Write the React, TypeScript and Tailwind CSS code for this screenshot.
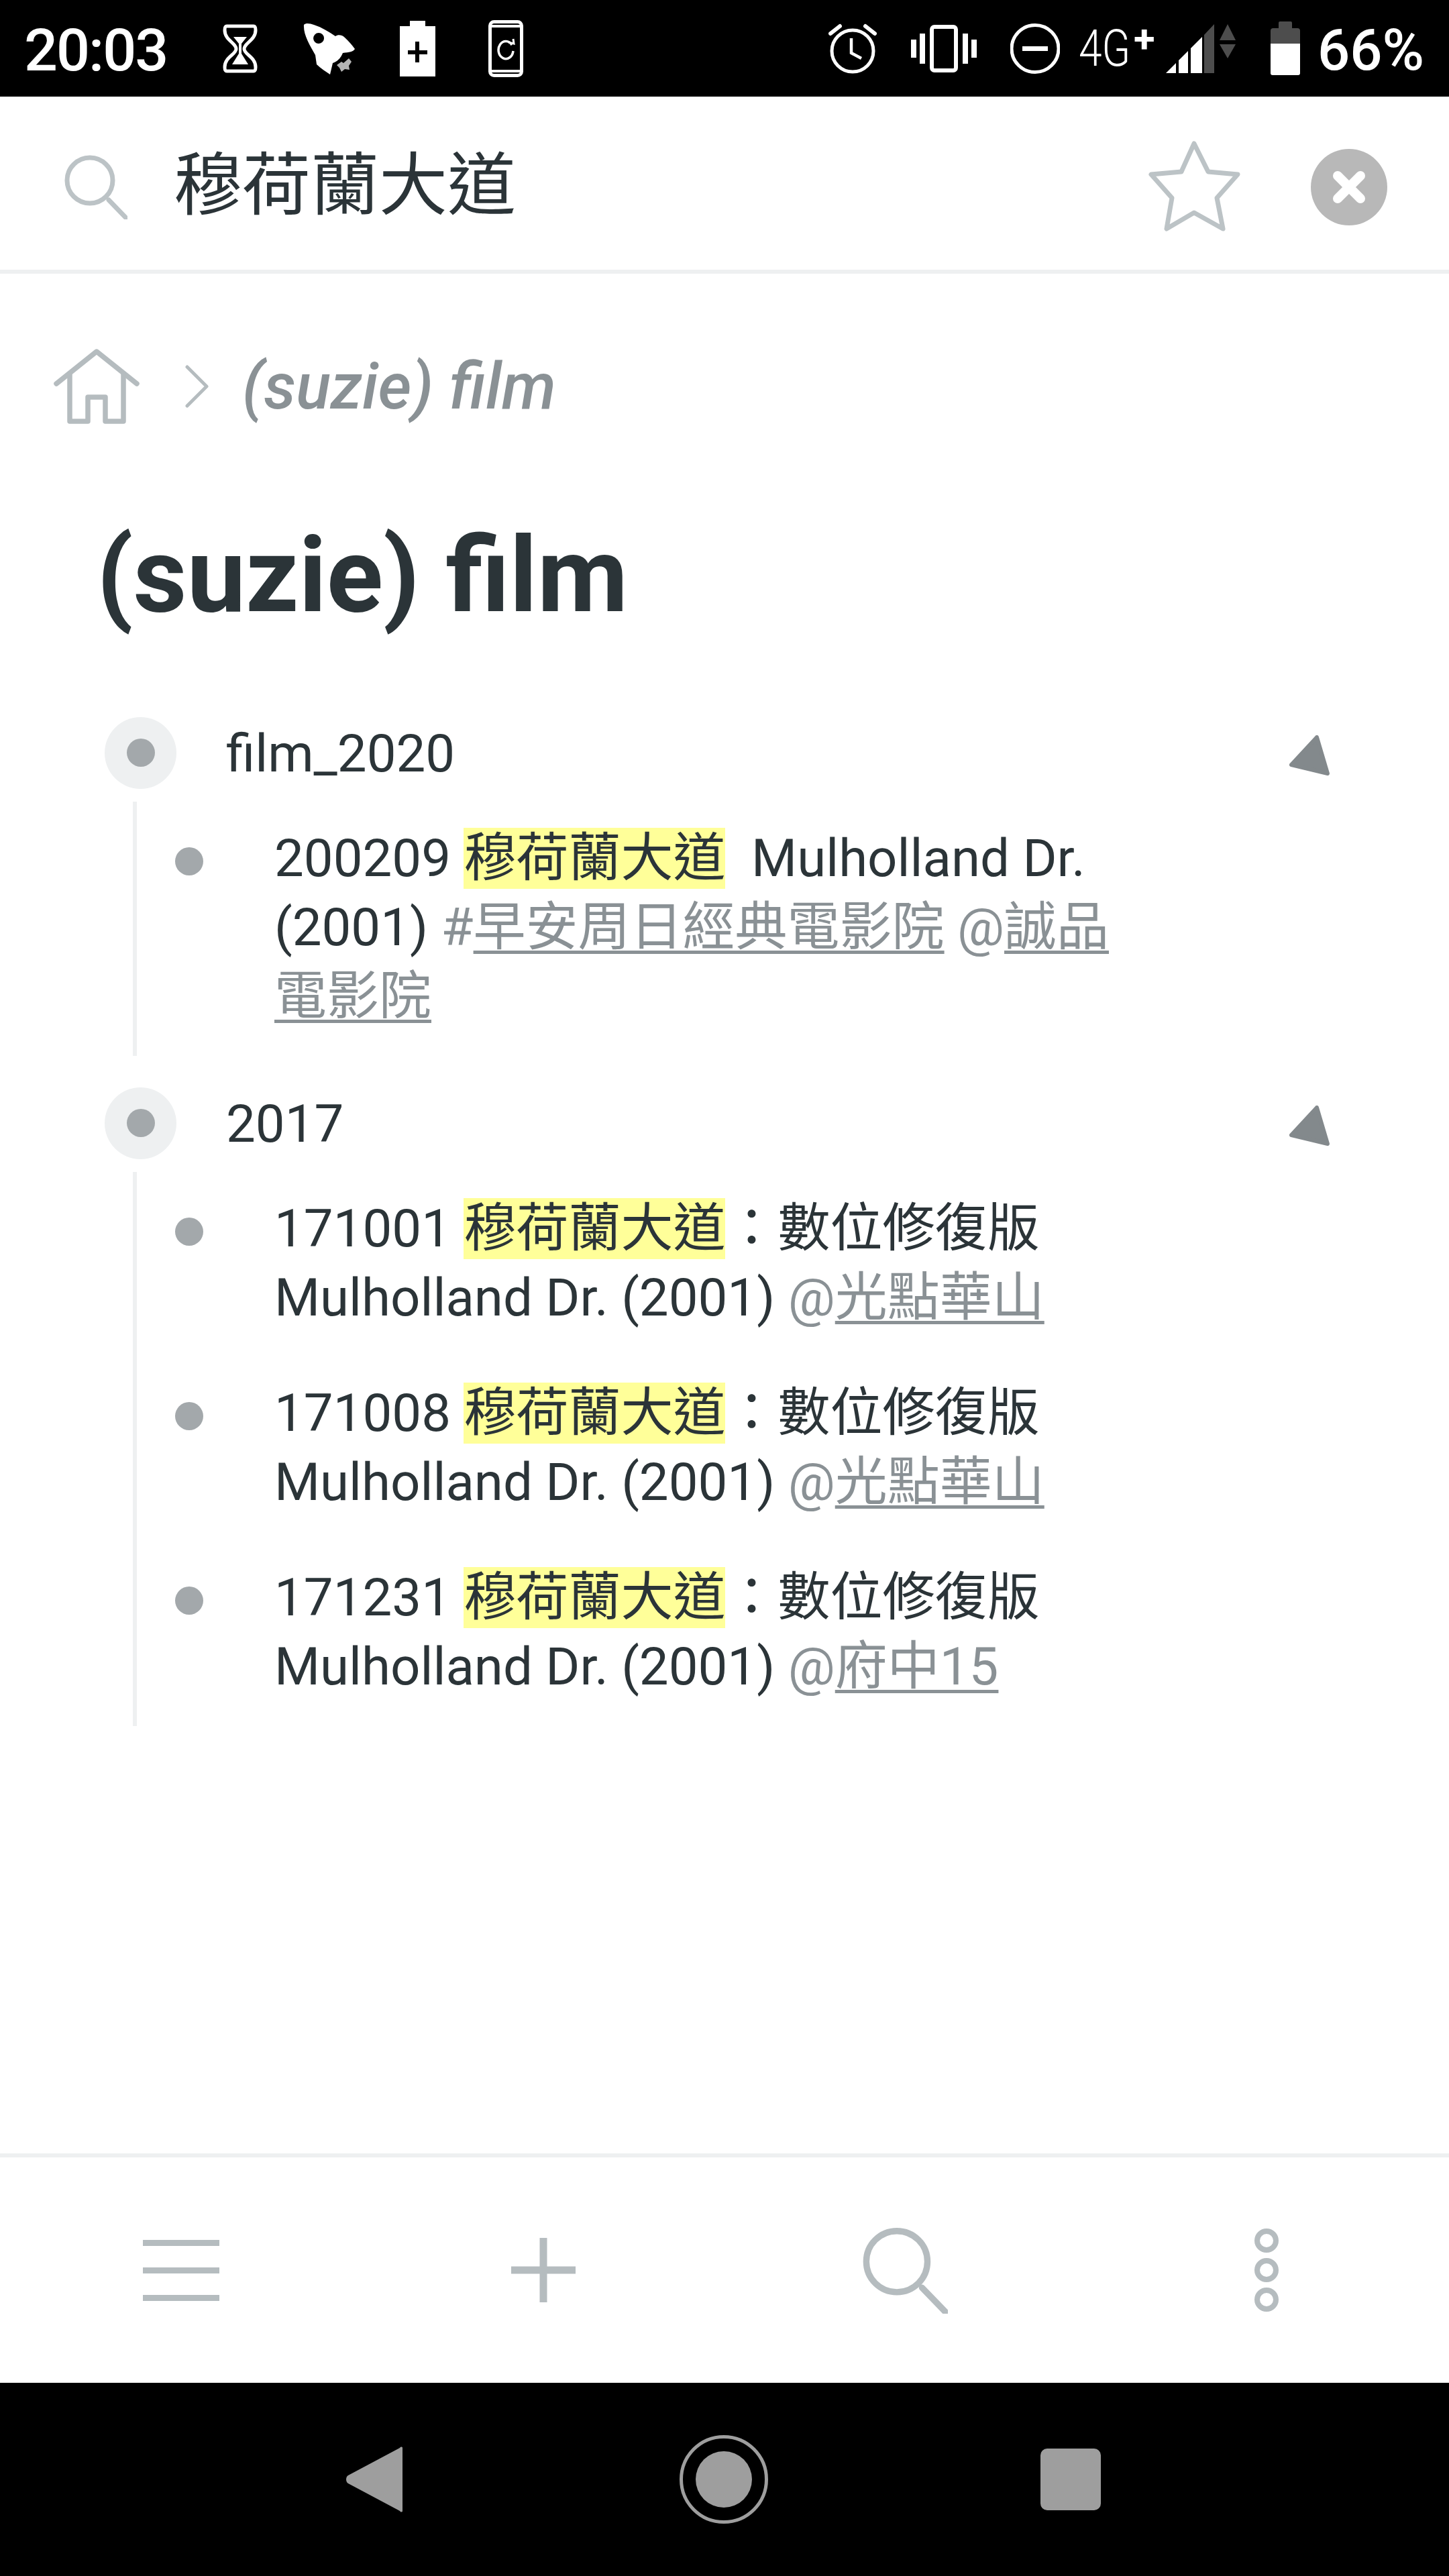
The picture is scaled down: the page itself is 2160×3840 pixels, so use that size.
import React from 'react';

const Search = ({ className }: { className: string }) => (
  <svg viewBox="0 0 94 97" className={className} fill="none" stroke="currentColor" strokeWidth="7">
    <circle cx="38" cy="39" r="34" />
    <path d="M66 68 L92 95" strokeLinecap="round" />
  </svg>
);

const Triangle = () => (
  <svg viewBox="0 0 60 60" className="w-[60px] h-[60px] ml-auto mr-[178px] mt-[5px] text-[#83898c]" fill="currentColor" stroke="currentColor" strokeWidth="6" strokeLinejoin="round">
    <path d="M41 3 L3 44 L57 57 Z" />
  </svg>
);

const Hit = () => <span className="bg-[#ffff99]">穆荷蘭大道</span>;

const Ref = ({ mark, children }: { mark: string; children: React.ReactNode }) => (
  <span className="text-[#8a9195]">
    {mark}
    <span className="underline decoration-[5px] underline-offset-[8px]">{children}</span>
  </span>
);

const Group = ({ title, children }: { title: string; children: React.ReactNode }) => (
  <section className="mb-[48px]">
    <div className="flex items-center h-[107px] ml-[156px]">
      <div className="w-[107px] h-[107px] -mt-[3px] rounded-full bg-[#eef0f1] flex items-center justify-center">
        <div className="w-[42px] h-[42px] rounded-full bg-[#a3a8ab]" />
      </div>
      <div className="ml-[74px] text-[78px] leading-[107px]">{title}</div>
      <Triangle />
    </div>
    <div className="ml-[198px] mt-[18px] border-l-[6px] border-[#eef0f1] pt-[33px] pb-[37px] flex flex-col gap-[69px]">
      {children}
    </div>
  </section>
);

const Row = ({ children }: { children: React.ReactNode }) => (
  <div className="flex items-start">
    <div className="w-[42px] h-[42px] mt-[35px] ml-[57px] rounded-full bg-[#a3a8ab] shrink-0" />
    <div className="ml-[106px] w-[1280px] text-[78px] leading-[103px]">{children}</div>
  </div>
);

export default function App() {
  return (
    <div className="w-[2160px] h-[3840px] flex flex-col bg-white text-[#2b3438] font-[family-name:Roboto,'Noto_Sans_CJK_TC',sans-serif]">
      {/* status bar */}
      <div className="h-[144px] shrink-0 bg-black text-white flex items-center">
        <span className="ml-[36px] w-[210px] text-[88px] font-medium tracking-[-2px] leading-none mt-[6px] whitespace-nowrap">20:03</span>
        <svg viewBox="0 0 52 73" className="ml-[86px] w-[52px] h-[73px]" fill="none" stroke="currentColor" strokeWidth="5">
          <path d="M6 3 H46 C49 3 49 6 49 9 C49 24 32 28 32 37 C32 45 49 49 49 64 C49 67 49 70 46 70 H6 C3 70 3 67 3 64 C3 49 20 45 20 37 C20 28 3 24 3 9 C3 6 3 3 6 3 Z" />
          <path d="M16 19 H36 L28 29 V44 L38 60 H14 L24 44 V29 Z" fill="currentColor" stroke="none" />
        </svg>
        <svg viewBox="0 0 77 77" className="ml-[68px] w-[77px] h-[77px]" fill="currentColor">
          <path fillRule="evenodd" d="M1 3 C4 0 10 1 16 3 C28 7 38 13 48 20 C52 17 58 18 62 22 C68 28 73 33 77 39 C75 43 68 44 59 45 C56 52 52 57 44 60 L40 77 C34 73 26 68 20 62 L18 48 C10 34 0 18 1 3 Z M23 15 A8 8 0 1 0 23.1 31 A8 8 0 1 0 23 15 Z" />
          <path d="M50 63 L57 58 L60 60 L68 53 L72 58 L68 64 L69 70 L62 69 L57 73 L54 67 Z" fill="#b5b5b5" />
        </svg>
        <svg viewBox="0 0 53 83" className="ml-[67px] w-[53px] h-[83px]" fill="currentColor">
          <path fillRule="evenodd" d="M15 0 H38 V8 H53 V83 H0 V8 H15 Z M23 31 V44 H12 V50 H23 V62 H29 V50 H41 V44 H29 V31 Z" />
        </svg>
        <svg viewBox="0 0 52 85" className="ml-[79px] w-[52px] h-[85px]" fill="none" stroke="currentColor">
          <rect x="2.5" y="2.5" width="47" height="80" rx="6" strokeWidth="5" />
          <path d="M2 9 H50 M2 76 H50" strokeWidth="4" />
          <path d="M35 37 A11 13 0 1 0 37 46" strokeWidth="3.5" />
          <path d="M30 33 L38 35 L37 28" strokeWidth="3" />
        </svg>
        <svg viewBox="0 0 72 75" className="ml-[455px] w-[72px] h-[75px]" fill="none" stroke="currentColor" strokeWidth="5">
          <circle cx="36" cy="41" r="31" />
          <path d="M3 15 L17 4 M55 4 L69 15" strokeLinecap="round" strokeWidth="6" />
          <path d="M34 22 V44 L49 52" strokeWidth="4.5" />
        </svg>
        <svg viewBox="0 0 98 71" className="ml-[51px] w-[98px] h-[71px]" fill="none" stroke="currentColor">
          <rect x="31" y="3" width="36" height="65" rx="4" strokeWidth="6" />
          <path d="M4 22 V49 M17 13 V58 M81 13 V58 M94 22 V49" strokeWidth="8" />
        </svg>
        <svg viewBox="0 0 74 75" className="ml-[50px] w-[74px] h-[75px]" fill="none" stroke="currentColor">
          <circle cx="37" cy="37.5" r="35" strokeWidth="5" />
          <path d="M18 37.5 H56" strokeWidth="7" />
        </svg>
        <span className="ml-[28px] w-[112px] flex items-start leading-none">
          <span className="text-[76px] font-light origin-left scale-x-[0.82] w-[82px] leading-none">4G</span>
          <span className="text-[58px] font-bold leading-none -mt-[5px]">+</span>
        </span>
        <svg viewBox="0 0 104 73" className="ml-[18px] w-[104px] h-[73px]">
          <path d="M0 73 L54 19 V73 Z" fill="#fff" />
          <path d="M17 40 V73 M35 30 V73" stroke="#000" strokeWidth="4" />
          <path d="M57 16 L72 0 V73 H57 Z" fill="#4d4d4d" />
          <path d="M80 24 H104 L92 0 Z M80 30 H104 L92 51 Z" fill="#4d4d4d" />
        </svg>
        <div className="ml-[52px] w-[44px] h-[80px] flex flex-col">
          <div className="w-[20px] h-[10px] mx-auto bg-[#4d4d4d] rounded-t-[2px]" />
          <div className="h-[23px] bg-[#4d4d4d] rounded-t-[4px]" />
          <div className="flex-1 bg-white rounded-b-[3px]" />
        </div>
        <span className="ml-[26px] text-[85px] font-medium leading-none mt-[6px]">66%</span>
      </div>

      {/* search */}
      <div className="h-[264px] shrink-0 border-b-[6px] border-[#eef0f1] flex items-center">
        <Search className="ml-[96px] w-[94px] h-[97px] text-[#bcc3c6] mt-[10px]" />
        <span className="ml-[69px] text-[102px] leading-none mt-[8px]">穆荷蘭大道</span>
        <svg viewBox="0 0 138 136" className="ml-auto w-[138px] h-[136px] text-[#bcc3c6] mt-[8px]" fill="none" stroke="currentColor" strokeWidth="7" strokeLinejoin="round">
          <path d="M69 5 L90 47 L134 51 L103 86 L112 132 L69 108 L28 132 L36 86 L5 51 L50 47 Z" />
        </svg>
        <div className="ml-[105px] mr-[92px] w-[114px] h-[114px] rounded-full bg-[#b8b8b8] flex items-center justify-center mt-[12px]">
          <svg viewBox="0 0 50 50" className="w-[50px] h-[50px]" stroke="#fff" strokeWidth="14" strokeLinecap="round">
            <path d="M8 8 L42 42 M42 8 L8 42" />
          </svg>
        </div>
      </div>

      {/* page */}
      <main className="flex-1 min-h-0">
        <div className="flex items-center h-[112px] mt-[112px]">
          <svg viewBox="0 0 128 112" className="ml-[80px] w-[128px] h-[112px] text-[#b5bcbf]" fill="none" stroke="currentColor" strokeWidth="7.5" strokeLinecap="round" strokeLinejoin="round">
            <path d="M4 52 L64 4 L124 52" />
            <path d="M24 38 V108 H51 V72 H77 V108 H104 V38" />
          </svg>
          <svg viewBox="0 0 35 64" className="ml-[68px] w-[35px] h-[64px] text-[#b5bcbf]" fill="none" stroke="currentColor" strokeWidth="5" strokeLinecap="round" strokeLinejoin="round">
            <path d="M3 3 L32 32 L3 61" />
          </svg>
          <span className="ml-[50px] text-[96px] leading-none italic font-medium text-[#8a9195]">(suzie) film</span>
        </div>
        <h1 className="ml-[144px] mt-[136px] text-[156px] leading-[180px] font-bold">(suzie) film</h1>
        <div className="mt-[122px]">
          <Group title="film_2020">
            <Row>
              200209 <Hit />{'\u00a0 '}Mulholland Dr. (2001) <Ref mark="#">早安周日經典電影院</Ref> <Ref mark="@">誠品電影院</Ref>
            </Row>
          </Group>
          <Group title="2017">
            <Row>
              171001 <Hit />：數位修復版 Mulholland Dr. (2001) <Ref mark="@">光點華山</Ref>
            </Row>
            <Row>
              171008 <Hit />：數位修復版 Mulholland Dr. (2001) <Ref mark="@">光點華山</Ref>
            </Row>
            <Row>
              171231 <Hit />：數位修復版 Mulholland Dr. (2001) <Ref mark="@">府中15</Ref>
            </Row>
          </Group>
        </div>
      </main>

      {/* bottom toolbar */}
      <div className="h-[342px] shrink-0 border-t-[6px] border-[#eef0f1] flex items-center text-[#b5bcbf]">
        <div className="ml-[213px] w-[114px] flex flex-col gap-[32px]">
          <div className="h-[9px] bg-[#b5bcbf]" />
          <div className="h-[9px] bg-[#b5bcbf]" />
          <div className="h-[9px] bg-[#b5bcbf]" />
        </div>
        <svg viewBox="0 0 96 96" className="ml-[435px] w-[96px] h-[96px]" stroke="currentColor" strokeWidth="11">
          <path d="M0 48 H96 M48 0 V96" />
        </svg>
        <Search className="ml-[427px] w-[128px] h-[130px]" />
        <div className="ml-[457px] flex flex-col gap-[8px]">
          <div className="w-[36px] h-[36px] rounded-full border-[8px] border-[#b5bcbf]" />
          <div className="w-[36px] h-[36px] rounded-full border-[8px] border-[#b5bcbf]" />
          <div className="w-[36px] h-[36px] rounded-full border-[8px] border-[#b5bcbf]" />
        </div>
      </div>

      {/* android nav */}
      <div className="h-[288px] shrink-0 bg-black flex items-center">
        <svg viewBox="0 0 84 98" className="ml-[516px] w-[84px] h-[98px]" fill="#9e9e9e">
          <path d="M84 2 V96 C84 98 81 98 80 96 L3 55 C-1 53 -1 45 3 43 L80 2 C81 0 84 0 84 2 Z" />
        </svg>
        <div className="ml-[413px] w-[132px] h-[132px] rounded-full border-[5px] border-[#9e9e9e] flex items-center justify-center">
          <div className="w-[84px] h-[84px] rounded-full bg-[#9e9e9e]" />
        </div>
        <div className="ml-[406px] w-[90px] h-[92px] rounded-[10px] bg-[#9e9e9e]" />
      </div>
    </div>
  );
}
